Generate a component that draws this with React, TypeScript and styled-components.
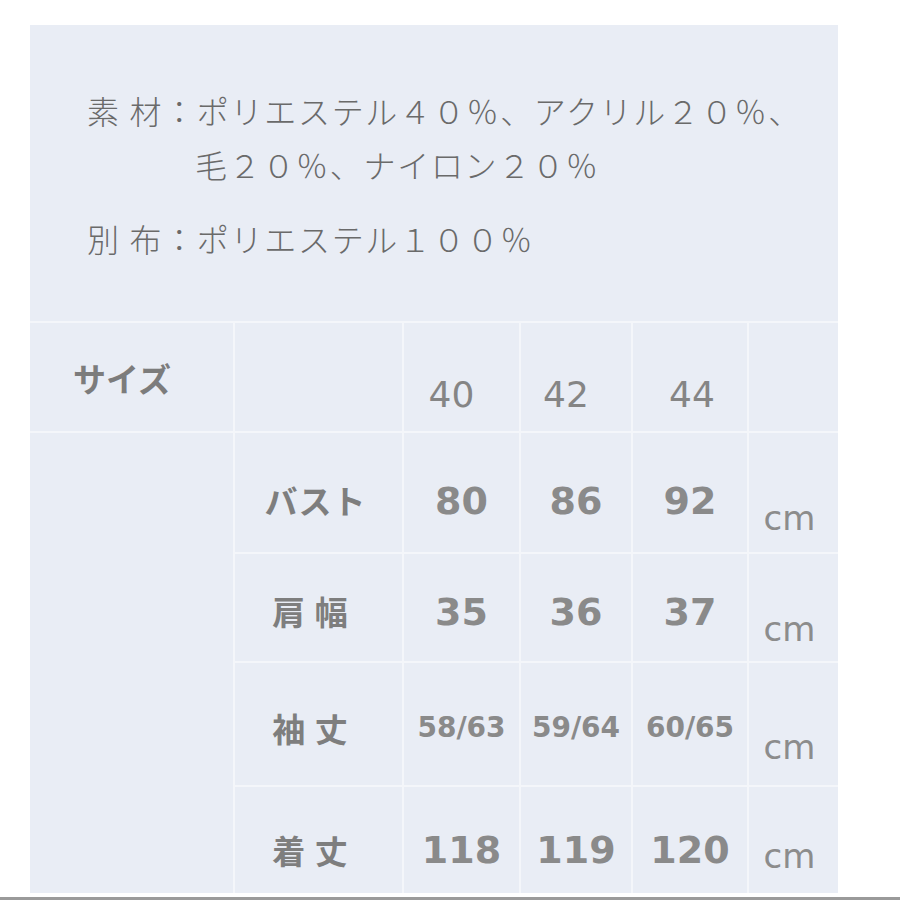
import styled, { createGlobalStyle } from "styled-components";

const GlobalStyle = createGlobalStyle`
  html, body {
    margin: 0;
    padding: 0;
    background: #ffffff;
  }
  body {
    font-family: "Noto Sans CJK JP", "Noto Sans", sans-serif;
  }
`;

type Row = {
  label: string;
  spaced?: boolean;
  values: string[];
  small?: boolean;
  dy: number;
  cmDy: number;
};

const rows: Row[] = [
  { label: "バスト", values: ["80", "86", "92"], dy: 8, cmDy: 25 },
  { label: "肩 幅", spaced: true, values: ["35", "36", "37"], dy: 4, cmDy: 21 },
  { label: "袖 丈", spaced: true, values: ["58/63", "59/64", "60/65"], small: true, dy: 4, cmDy: 23 },
  { label: "着 丈", spaced: true, values: ["118", "119", "120"], dy: 10, cmDy: 16 },
];

const shift = (dy: number) =>
  `${dy > 0 ? dy * 2 : 0}px 0 ${dy < 0 ? -dy * 2 : 0}px`;

export default function App() {
  return (
    <>
      <GlobalStyle />
      <Page>
        <Panel>
          <Materials>
            <MaterialLine>素 材：ポリエステル４０％、アクリル２０％、</MaterialLine>
            <MaterialLine $indent>毛２０％、ナイロン２０％</MaterialLine>
            <MaterialLine $gap>別 布：ポリエステル１００％</MaterialLine>
          </Materials>
          <SizeGrid>
            <Cell $dy={1} $justify="flex-start">
              <HeadLabel>サイズ</HeadLabel>
            </Cell>
            <Cell $dy={0} />
            {["40", "42", "44"].map((s, i) => (
              <Cell key={s} $dy={18} $dx={[-10, -10, 2][i]}>
                <SizeNum>{s}</SizeNum>
              </Cell>
            ))}
            <Cell $dy={0} />
            <MergedCell />
            {rows.map((row) => (
              <RowGroup key={row.label}>
                <Cell $dy={row.dy} $dx={row.spaced ? -8 : -3}>
                  <RowLabel $wide={row.spaced}>{row.label}</RowLabel>
                </Cell>
                {row.values.map((v) => (
                  <Cell key={v} $dy={row.dy}>
                    <Value $small={row.small}>{v}</Value>
                  </Cell>
                ))}
                <Cell $dy={row.cmDy} $dx={-4}>
                  <Unit>cm</Unit>
                </Cell>
              </RowGroup>
            ))}
          </SizeGrid>
        </Panel>
        <BottomRule />
      </Page>
    </>
  );
}

const Page = styled.div`
  width: 900px;
  height: 900px;
  padding-top: 25px;
  box-sizing: border-box;
  display: flex;
  flex-direction: column;
  overflow: hidden;
`;

const Panel = styled.div`
  margin-left: 30px;
  width: 808px;
  height: 868px;
  background: #e9edf5;
  display: flex;
  flex-direction: column;
`;

const Materials = styled.div`
  height: 296px;
  box-sizing: border-box;
  padding: 58px 0 0 57px;
`;

const MaterialLine = styled.div<{ $indent?: boolean; $gap?: boolean }>`
  font-family: "Noto Sans CJK JP", sans-serif;
  font-weight: 300;
  font-size: 32px;
  letter-spacing: 1.7px;
  line-height: 54px;
  color: #6a6a6a;
  white-space: nowrap;
  padding-left: ${(p) => (p.$indent ? "108px" : "0")};
  margin-top: ${(p) => (p.$gap ? "20px" : "0")};
`;

const SizeGrid = styled.div`
  flex: 1;
  display: grid;
  grid-template-columns: 203px 167px 115px 110px 114px 89px;
  grid-template-rows: 108px 119px 107px 122px 106px;
  gap: 2px;
  padding-top: 2px;
  background: #f4f6fa;
`;

const RowGroup = styled.div`
  display: contents;
`;

const Cell = styled.div<{ $dy?: number; $dx?: number; $justify?: string }>`
  background: #e9edf5;
  display: flex;
  align-items: center;
  justify-content: ${(p) => p.$justify || "center"};
  padding: ${(p) => shift(p.$dy || 0)};
  padding-left: ${(p) => (p.$justify ? "43px" : (p.$dx || 0) < 0 ? "0" : `${(p.$dx || 0) * 2}px`)};
  padding-right: ${(p) => ((p.$dx || 0) < 0 ? `${-(p.$dx || 0) * 2}px` : "0")};
  box-sizing: border-box;
  min-width: 0;
`;

const MergedCell = styled.div`
  background: #e9edf5;
  grid-column: 1;
  grid-row: 2 / span 4;
`;

const HeadLabel = styled.span`
  font-family: "Noto Sans CJK JP", sans-serif;
  font-weight: 700;
  font-size: 33px;
  color: #7c7c7c;
  line-height: 1;
`;

const RowLabel = styled.span<{ $wide?: boolean }>`
  font-family: "Noto Sans CJK JP", sans-serif;
  font-weight: 700;
  font-size: 33px;
  letter-spacing: 1px;
  color: #7e7e7e;
  line-height: 1;
  white-space: pre;
`;

const SizeNum = styled.span`
  font-family: "DejaVu Sans", sans-serif;
  font-weight: 400;
  font-size: 36px;
  color: #858585;
  line-height: 1;
`;

const Value = styled.span<{ $small?: boolean }>`
  font-family: "DejaVu Sans", sans-serif;
  font-weight: 700;
  font-size: ${(p) => (p.$small ? "28px" : "38px")};
  color: #8a8a8a;
  line-height: 1;
  white-space: nowrap;
`;

const Unit = styled.span`
  font-family: "DejaVu Sans", sans-serif;
  font-weight: 400;
  font-size: 34px;
  color: #8c8c8c;
  line-height: 1;
`;

const BottomRule = styled.div`
  margin-top: 4px;
  height: 3px;
  background: #9a9a9a;
`;
